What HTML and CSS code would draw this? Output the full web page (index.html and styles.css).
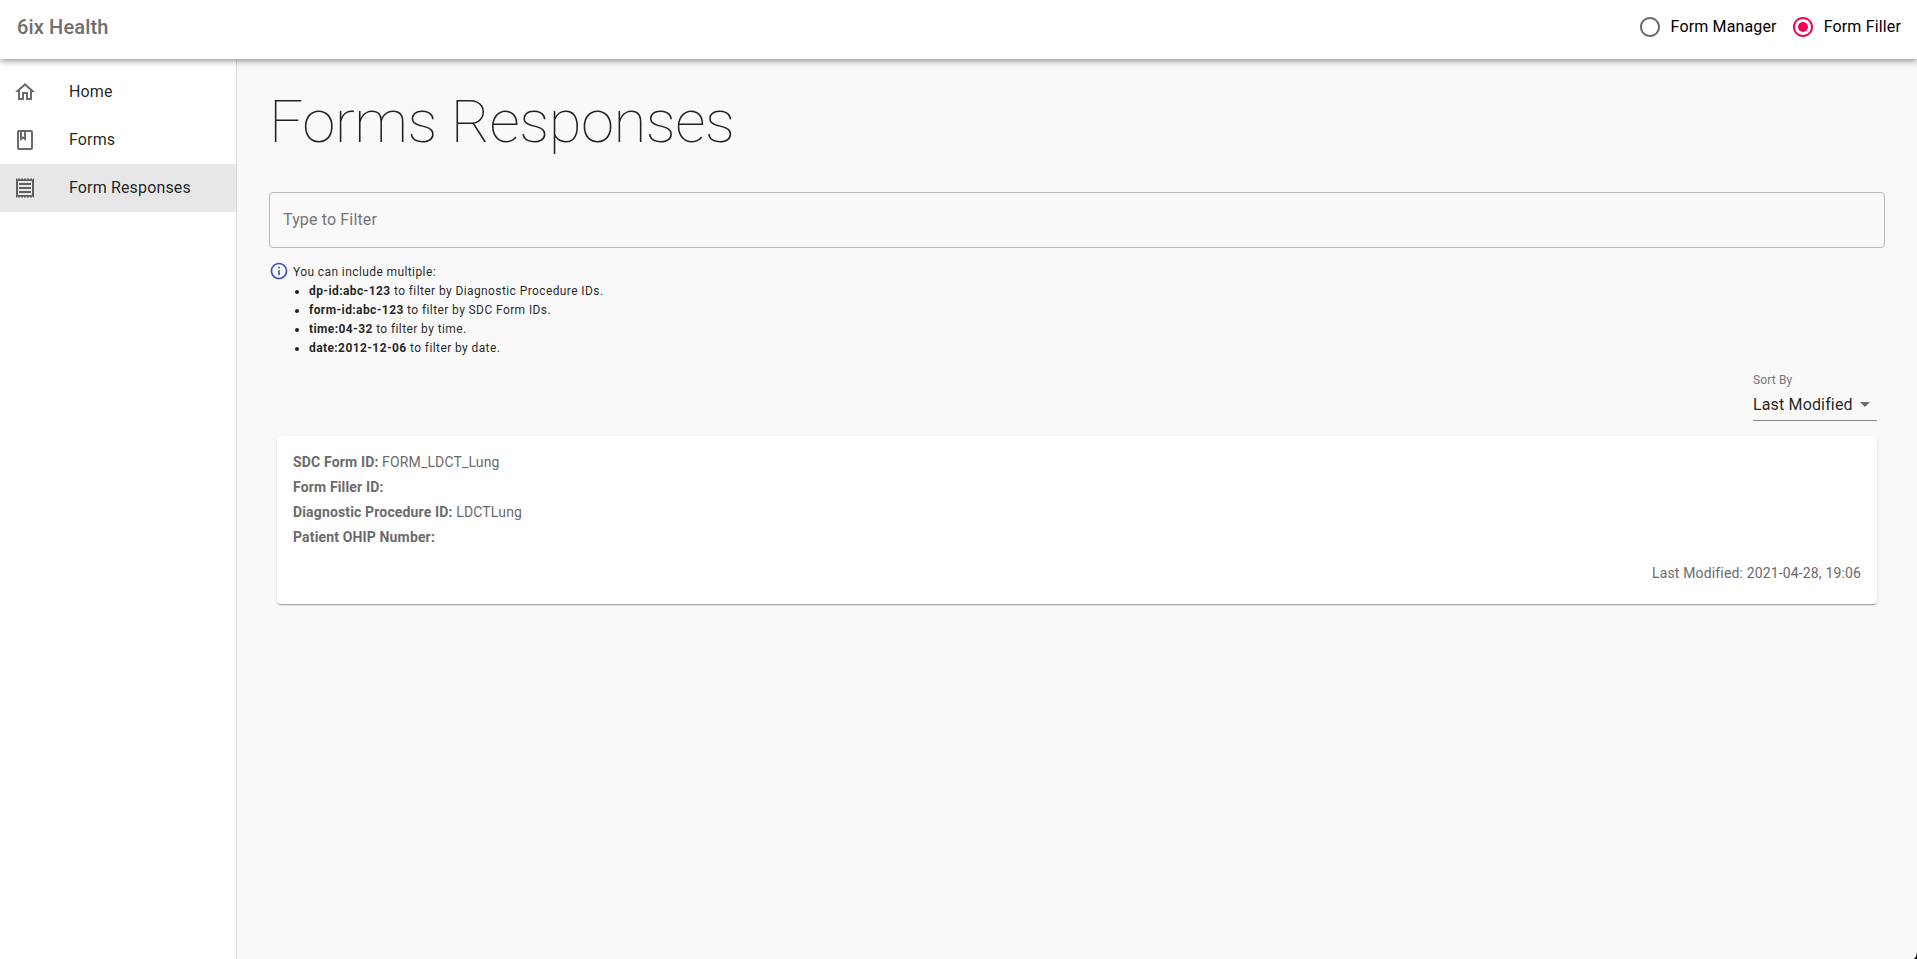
FILE: index.html
```html
<!DOCTYPE html>
<html lang="en">
<head>
<meta charset="utf-8">
<title>6ix Health</title>
<link rel="stylesheet" href="styles.css">
</head>
<body>
<div class="app">
  <header class="appbar">
    <div class="brand">6ix Health</div>
    <div class="roles">
      <label class="role">
        <svg class="icon" viewBox="0 0 24 24"><path d="M12 2C6.48 2 2 6.48 2 12s4.48 10 10 10 10-4.48 10-10S17.52 2 12 2zm0 18c-4.42 0-8-3.58-8-8s3.58-8 8-8 8 3.58 8 8-3.58 8-8 8z"/></svg>
        <span class="label">Form Manager</span>
      </label>
      <label class="role">
        <svg class="icon icon-checked" viewBox="0 0 24 24"><path d="M12 2C6.48 2 2 6.48 2 12s4.48 10 10 10 10-4.48 10-10S17.52 2 12 2zm0 18c-4.42 0-8-3.58-8-8s3.58-8 8-8 8 3.58 8 8-3.58 8-8 8z"/><circle cx="12" cy="12" r="5"/></svg>
        <span class="label">Form Filler</span>
      </label>
    </div>
  </header>
  <div class="body">
    <nav class="sidebar">
      <a class="nav-item">
        <svg class="icon" viewBox="0 0 24 24"><path d="M12 5.69l5 4.5V18h-2v-6H9v6H7v-7.81l5-4.5M12 3L2 12h3v8h6v-6h2v6h6v-8h3L12 3z"/></svg>
        <span class="label">Home</span>
      </a>
      <a class="nav-item">
        <svg class="icon" viewBox="0 0 24 24"><path d="M18 2H6c-1.1 0-2 .9-2 2v16c0 1.1.9 2 2 2h12c1.1 0 2-.9 2-2V4c0-1.1-.9-2-2-2zM9 4h2v5l-1-.75L9 9V4zm9 16H6V4h1v9l3-2.25L13 13V4h5v16z"/></svg>
        <span class="label">Forms</span>
      </a>
      <a class="nav-item nav-item-active">
        <svg class="icon icon-receipt" viewBox="0 0 24 24"><path d="M19.5 3.5L18 2l-1.5 1.5L15 2l-1.5 1.5L12 2l-1.5 1.5L9 2 7.5 3.5 6 2 4.5 3.5 3 2v20l1.500-1.500L6 22l1.500-1.500L9 22l1.500-1.500L12 22l1.500-1.500L15 22l1.500-1.500L18 22l1.500-1.500L21 22V2l-1.500 1.500zM19 19.090H5V4.910h14v14.180zM6 15h12v2H6zm0-4h12v2H6zm0-4h12v2H6z"/></svg>
        <span class="label">Form Responses</span>
      </a>
    </nav>
    <main class="content">
      <h1 class="title">Forms Responses</h1>
      <input class="filter" type="text" placeholder="Type to Filter">
      <div class="help">
        <svg class="info" viewBox="0 0 24 24"><path d="M11 7h2v2h-2zm0 4h2v6h-2zm1-9C6.480 2 2 6.480 2 12s4.480 10 10 10 10-4.480 10-10S17.520 2 12 2zm0 18c-4.410 0-8-3.590-8-8s3.590-8 8-8 8 3.590 8 8-3.590 8-8 8z"/></svg>
        <div class="help-text">
          <div>You can include multiple:</div>
          <ul class="help-list">
            <li><b>dp-id:abc-123</b> to filter by Diagnostic Procedure IDs.</li>
            <li><b>form-id:abc-123</b> to filter by SDC Form IDs.</li>
            <li><b>time:04-32</b> to filter by time.</li>
            <li><b>date:2012-12-06</b> to filter by date.</li>
          </ul>
        </div>
      </div>
      <div class="sort">
        <div class="sort-label">Sort By</div>
        <div class="sort-select">
          <span>Last Modified</span>
          <svg class="icon" viewBox="0 0 24 24"><path d="M7 10l5 5 5-5z"/></svg>
        </div>
      </div>
      <article class="card">
        <div><b>SDC Form ID:</b> FORM_LDCT_Lung</div>
        <div><b>Form Filler ID:</b></div>
        <div><b>Diagnostic Procedure ID:</b> LDCTLung</div>
        <div><b>Patient OHIP Number:</b></div>
        <div class="modified">Last Modified: 2021-04-28, 19:06</div>
      </article>
    </main>
  </div>
</div>
</body>
</html>
```
FILE: styles.css
```css
* { box-sizing: border-box; }

html { background: #000; }

body {
  margin: 0;
  font-family: Roboto, "Liberation Sans", sans-serif;
  font-size: 16px;
  letter-spacing: 0.15px;
  color: rgba(0, 0, 0, 0.87);
}

.app {
  display: flex;
  flex-direction: column;
  height: 100vh;
  overflow: hidden;
  background: #f9f9f9;
  border-bottom-right-radius: 4px 8px;
}

.icon {
  flex: none;
  width: 24px;
  height: 24px;
  fill: #6b6b6b;
}

.icon-checked { fill: #f50057; }

.icon-receipt { fill: #5f5f5f; }

.label { padding-bottom: 2px; }

.appbar {
  position: relative;
  z-index: 1;
  flex: none;
  display: flex;
  justify-content: space-between;
  height: 59px;
  padding: 0 16px 5px 17px;
  align-items: center;
  background: #fff;
  box-shadow: 0 2px 4px -1px rgba(0, 0, 0, 0.2), 0 4px 5px 0 rgba(0, 0, 0, 0.14), 0 1px 10px 0 rgba(0, 0, 0, 0.12);
}

.brand {
  font-size: 20px;
  font-weight: 500;
  line-height: 32px;
  color: #6e6e6e;
}

.roles { display: flex; gap: 14px; color: #000; }

.role { display: flex; align-items: center; gap: 9px; }

.body { flex: 1; display: flex; min-height: 0; }

.sidebar {
  flex: none;
  width: 237px;
  padding-top: 9px;
  background: #fff;
  border-right: 1px solid #dcdcdc;
}

.nav-item {
  display: flex;
  align-items: center;
  gap: 32px;
  height: 48px;
  padding-left: 13px;
}

.nav-item-active { background: #e7e7e7; }

.content {
  flex: 1;
  display: flex;
  flex-direction: column;
  min-width: 0;
  padding: 27px 32px 0;
}

.title {
  margin: 0 0 34px;
  font-size: 60px;
  font-weight: 100;
  line-height: 72px;
  letter-spacing: -0.5px;
}

.filter {
  height: 56px;
  padding: 0 13px 2px;
  font: inherit;
  letter-spacing: inherit;
  background: transparent;
  border: 1px solid #b9b9b9;
  border-radius: 4px;
}

.filter::placeholder { color: #757575; opacity: 1; }

.help {
  display: flex;
  gap: 4px;
  margin-top: 13px;
  font-size: 12px;
  line-height: 19px;
  letter-spacing: 0.4px;
}

.info { flex: none; width: 20px; height: 20px; fill: #3f51b5; }

.help-text { padding-top: 2px; }

.help-list { margin: 0; padding-left: 16px; }

.sort {
  align-self: flex-end;
  width: 124px;
  margin: 14px 8px 0 0;
}

.sort-label {
  font-size: 12px;
  line-height: 16px;
  color: #757575;
}

.sort-select {
  display: flex;
  align-items: center;
  justify-content: space-between;
  height: 33px;
  border-bottom: 1px solid #8a8a8a;
}

.card {
  height: 168px;
  margin: 15px 8px 0;
  padding: 14px 16px;
  font-size: 14px;
  line-height: 25px;
  color: #6b6b6b;
  background: #fff;
  border-radius: 4px;
  box-shadow: 0 2px 1px -1px rgba(0, 0, 0, 0.2), 0 1px 1px 0 rgba(0, 0, 0, 0.14), 0 1px 3px 0 rgba(0, 0, 0, 0.12);
}

.modified { margin-top: 11px; text-align: right; }
```
